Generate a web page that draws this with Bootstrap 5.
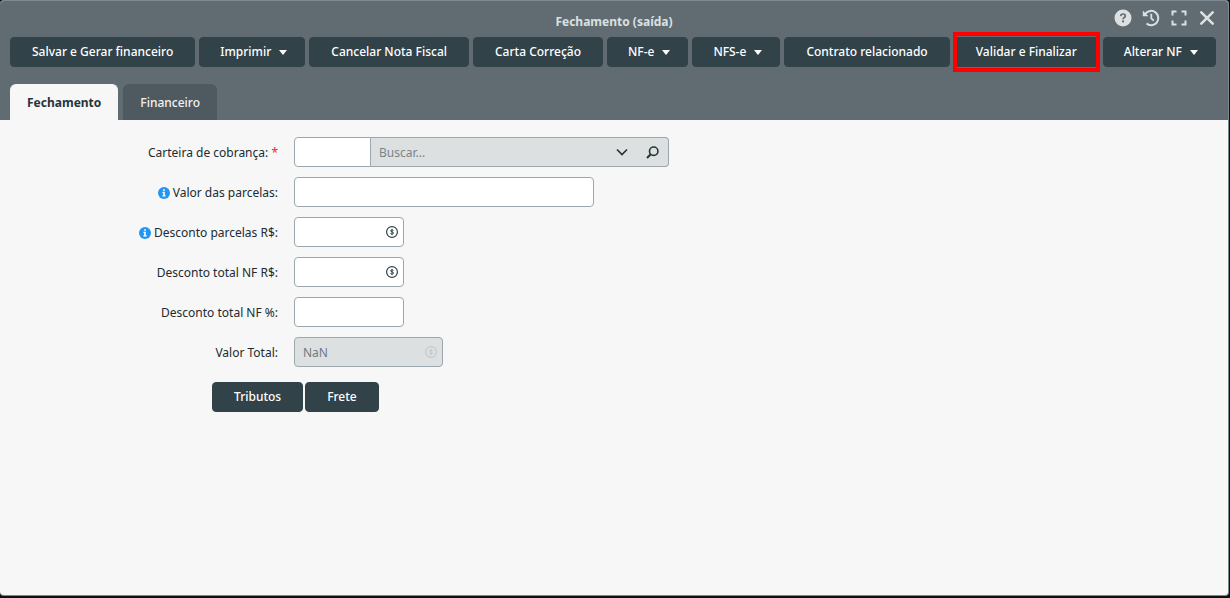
<!DOCTYPE html>
<html lang="pt-BR">
<head>
<meta charset="utf-8">
<meta name="viewport" content="width=device-width, initial-scale=1">
<title>Fechamento (saída)</title>
<link rel="stylesheet" href="https://cdn.jsdelivr.net/npm/bootstrap@5.3.0/dist/css/bootstrap.min.css">
<style>
  body {
    background: #0d1014;
    font-family: "Noto Sans", sans-serif;
    font-size: 12px;
    line-height: 18px;
    color: #212b30;
    padding: 0 1px 2px 0;
  }
  .app-window {
    background: #f7f7f7;
    border: 1px solid #7d898f;
    border-left: 0;
    border-radius: 4px;
    overflow: hidden;
  }
  .window-head { background: #606c72; }
  .title-bar { height: 36px; }
  .window-title {
    font-size: 12px;
    line-height: 18px;
    font-weight: 700;
    color: #dce0e1;
    padding-top: 12px;
  }
  .window-tools { top: 7px; right: 11px; gap: 8px; }
  .tool-btn {
    width: 20px;
    height: 20px;
    padding: 0;
    border: 0;
    background: none;
    color: #dce0e1;
    display: flex;
    align-items: center;
    justify-content: center;
  }
  .toolbar { gap: 4px; padding: 0 10px; }
  .btn-dark-slate {
    --bs-btn-color: #fff;
    --bs-btn-bg: #324249;
    --bs-btn-border-color: #324249;
    --bs-btn-hover-color: #fff;
    --bs-btn-hover-bg: #28363c;
    --bs-btn-active-bg: #28363c;
    --bs-btn-active-color: #fff;
    --bs-btn-font-size: 12px;
    --bs-btn-font-weight: 500;
    --bs-btn-line-height: 18px;
    --bs-btn-padding-x: 21px;
    --bs-btn-padding-y: 5px;
    --bs-btn-border-radius: 4px;
    height: 30px;
    white-space: nowrap;
  }
  .btn-dark-slate.dropdown-toggle { padding-right: 17px; padding-left: 20px; }
  .btn-dark-slate.dropdown-toggle::after {
    border-top: 5px solid;
    border-left: 4px solid transparent;
    border-right: 4px solid transparent;
    margin-left: 8px;
    vertical-align: 1px;
  }
  .highlighted { position: relative; }
  .highlighted::after {
    content: "";
    position: absolute;
    inset: -6px -2px;
    border: 4px solid #f00;
    pointer-events: none;
  }
  .window-tabs { gap: 5px; padding: 17px 10px 0; border: 0; }
  .window-tabs .nav-link {
    height: 36px;
    padding: 9px 16px;
    border: 1px solid #4f5a60;
    border-bottom: 0;
    border-radius: 6px 6px 0 0;
    margin: 0;
    background: #4f5a60;
    color: #f0f2f2;
    font-weight: 500;
    line-height: 18px;
  }
  .window-tabs .nav-link.active {
    background: #f7f7f7;
    border-color: #f7f7f7;
    color: #26343a;
    font-weight: 700;
  }
  .window-body { padding: 17px 10px 0 0; min-height: calc(100vh - 123px); }
  .field-rows { gap: 10px; }
  .field-row { gap: 16px; }
  .field-label { width: 278px; text-align: right; padding-top: 2px; }
  .required-mark { color: #f5222d; }
  .info-dot { width: 12px; height: 12px; margin: -2px 3px 0 0; }
  .field-box {
    height: 30px;
    border: 1px solid #9ba7ad;
    border-radius: 4px;
    padding: 0 8px;
    background: #fff;
    font-size: 12px;
    line-height: 18px;
    color: #212b30;
  }
  .box-code { width: 77px; border-radius: 4px 0 0 4px; }
  .box-long { width: 300px; }
  .box-short { width: 110px; }
  .box-total { width: 149px; }
  .box-total:disabled { background: #dce0e1; color: #6f7b80; opacity: 1; }
  .search-box {
    width: 298px;
    height: 30px;
    border: 1px solid #9ba7ad;
    border-left: 0;
    border-radius: 0 4px 4px 0;
    background: #dce0e1;
  }
  .search-input {
    border: 0;
    background: none;
    min-width: 0;
    padding: 2px 8px 0;
    font-size: 12px;
    line-height: 18px;
  }
  .search-input::placeholder { color: #7b8488; }
  .search-btn {
    width: 31px;
    border: 0;
    background: none;
    padding: 0;
    color: #26343a;
    display: flex;
    align-items: center;
    justify-content: center;
  }
  .money-icon { position: absolute; right: 6px; top: 9px; width: 12px; height: 12px; color: #324249; }
  .money-icon.muted { color: #c3c9cc; }
  .form-actions { gap: 2px; padding: 15px 0 0 212px; }
</style>
</head>
<body>
<svg class="d-none" aria-hidden="true">
  <symbol id="i-info" viewBox="0 0 12 12">
    <circle cx="6" cy="6" r="6" fill="#2196f3"/>
    <path d="M5.1 2.3h1.8v1.5H5.1zM4.4 4.8h2.4v3.4h.8v1.2H4.4V8.200h.8V6h-.8z" fill="#fff"/>
  </symbol>
  <symbol id="i-money" viewBox="0 0 12 12">
    <circle cx="6" cy="6" r="5.400" fill="none" stroke="currentColor" stroke-width="1.200"/>
    <path d="M7.500 4.500C7.200 4 6.600 3.900 6 3.900c-.9 0-1.400.3-1.400.9 0 1.300 2.900.8 2.900 2.200 0 .8-.7 1.100-1.500 1.100-.7 0-1.200-.2-1.600-.6M6 2.900v6.200" fill="none" stroke="currentColor" stroke-width="1"/>
  </symbol>
</svg>

<main class="app-window">
  <header class="window-head">
    <div class="title-bar position-relative text-center">
      <h1 class="window-title m-0">Fechamento (saída)</h1>
      <div class="window-tools position-absolute d-flex">
        <button class="tool-btn" type="button" aria-label="Ajuda">
          <svg width="18" height="18" viewBox="0 0 18 18"><circle cx="9" cy="9" r="8.500" fill="currentColor"/><path d="M6.700 7.100C6.800 5.700 7.700 5 9 5s2.300.7 2.300 1.900c0 1.600-2.200 1.600-2.200 3.300" fill="none" stroke="#606c72" stroke-width="1.700"/><circle cx="9.100" cy="12.400" r="1.100" fill="#606c72"/></svg>
        </button>
        <button class="tool-btn" type="button" aria-label="Histórico">
          <svg width="18" height="18" viewBox="0 0 18 18"><path d="M3.300 4.800A7.200 7.200 0 1 1 4.500 14.600" fill="none" stroke="currentColor" stroke-width="2"/><path d="M.8 1.600v5.600h5.600z" fill="currentColor"/><path d="M9.300 4.800v4.500l2.500 2.300" fill="none" stroke="currentColor" stroke-width="1.800"/></svg>
        </button>
        <button class="tool-btn" type="button" aria-label="Tela cheia">
          <svg width="16" height="16" viewBox="0 0 16 16" fill="none" stroke="currentColor" stroke-width="2"><path d="M1.500 5.500v-4h4M10.500 1.500h4v4M14.500 10.500v4h-4M5.500 14.500h-4v-4"/></svg>
        </button>
        <button class="tool-btn" type="button" aria-label="Fechar">
          <svg width="16" height="16" viewBox="0 0 16 16" fill="none" stroke="currentColor" stroke-width="2.600" stroke-linecap="round"><path d="M2.300 2.300l11.400 11.400M13.700 2.300L2.300 13.700"/></svg>
        </button>
      </div>
    </div>

    <div class="toolbar d-flex flex-wrap">
      <button type="button" class="btn btn-dark-slate">Salvar e Gerar financeiro</button>
      <button type="button" class="btn btn-dark-slate dropdown-toggle">Imprimir</button>
      <button type="button" class="btn btn-dark-slate">Cancelar Nota Fiscal</button>
      <button type="button" class="btn btn-dark-slate">Carta Correção</button>
      <button type="button" class="btn btn-dark-slate dropdown-toggle">NF-e</button>
      <button type="button" class="btn btn-dark-slate dropdown-toggle">NFS-e</button>
      <button type="button" class="btn btn-dark-slate">Contrato relacionado</button>
      <button type="button" class="btn btn-dark-slate highlighted">Validar e Finalizar</button>
      <button type="button" class="btn btn-dark-slate dropdown-toggle">Alterar NF</button>
    </div>

    <nav class="nav nav-tabs window-tabs">
      <a class="nav-link active" href="#fechamento" aria-current="page">Fechamento</a>
      <a class="nav-link" href="#financeiro">Financeiro</a>
    </nav>
  </header>

  <form class="window-body" id="fechamento">
    <div class="field-rows d-flex flex-column">
      <div class="field-row d-flex align-items-center">
        <label class="field-label" for="carteira">Carteira de cobrança: <span class="required-mark">*</span></label>
        <div class="d-flex">
          <input class="field-box box-code" id="carteira" type="text">
          <div class="search-box d-flex">
            <input class="search-input flex-grow-1" type="text" placeholder="Buscar..." aria-label="Buscar carteira">
            <button class="search-btn" type="button" aria-label="Abrir lista">
              <svg width="12" height="12" viewBox="0 0 12 12" fill="none" stroke="currentColor" stroke-width="1.700"><path d="M1 3.500l5 5 5-5"/></svg>
            </button>
            <button class="search-btn" type="button" aria-label="Pesquisar">
              <svg width="13" height="13" viewBox="0 0 13 13" fill="none" stroke="currentColor"><circle cx="7.700" cy="5.200" r="4.200" stroke-width="1.600"/><path d="M4.700 8.300L1 12" stroke-width="2"/></svg>
            </button>
          </div>
        </div>
      </div>
      <div class="field-row d-flex align-items-center">
        <label class="field-label" for="parcelas"><svg class="info-dot"><use href="#i-info"/></svg>Valor das parcelas:</label>
        <input class="field-box box-long" id="parcelas" type="text">
      </div>
      <div class="field-row d-flex align-items-center">
        <label class="field-label" for="desc-parcelas"><svg class="info-dot"><use href="#i-info"/></svg>Desconto parcelas R$:</label>
        <div class="position-relative d-flex">
          <input class="field-box box-short" id="desc-parcelas" type="text">
          <svg class="money-icon"><use href="#i-money"/></svg>
        </div>
      </div>
      <div class="field-row d-flex align-items-center">
        <label class="field-label" for="desc-total">Desconto total NF R$:</label>
        <div class="position-relative d-flex">
          <input class="field-box box-short" id="desc-total" type="text">
          <svg class="money-icon"><use href="#i-money"/></svg>
        </div>
      </div>
      <div class="field-row d-flex align-items-center">
        <label class="field-label" for="desc-perc">Desconto total NF %:</label>
        <input class="field-box box-short" id="desc-perc" type="text">
      </div>
      <div class="field-row d-flex align-items-center">
        <label class="field-label" for="valor-total">Valor Total:</label>
        <div class="position-relative d-flex">
          <input class="field-box box-total" id="valor-total" type="text" value="NaN" disabled>
          <svg class="money-icon muted"><use href="#i-money"/></svg>
        </div>
      </div>
    </div>
    <div class="form-actions d-flex">
      <button type="button" class="btn btn-dark-slate">Tributos</button>
      <button type="button" class="btn btn-dark-slate">Frete</button>
    </div>
  </form>
</main>
<script src="https://cdn.jsdelivr.net/npm/bootstrap@5.3.0/dist/js/bootstrap.bundle.min.js"></script>
</body>
</html>
